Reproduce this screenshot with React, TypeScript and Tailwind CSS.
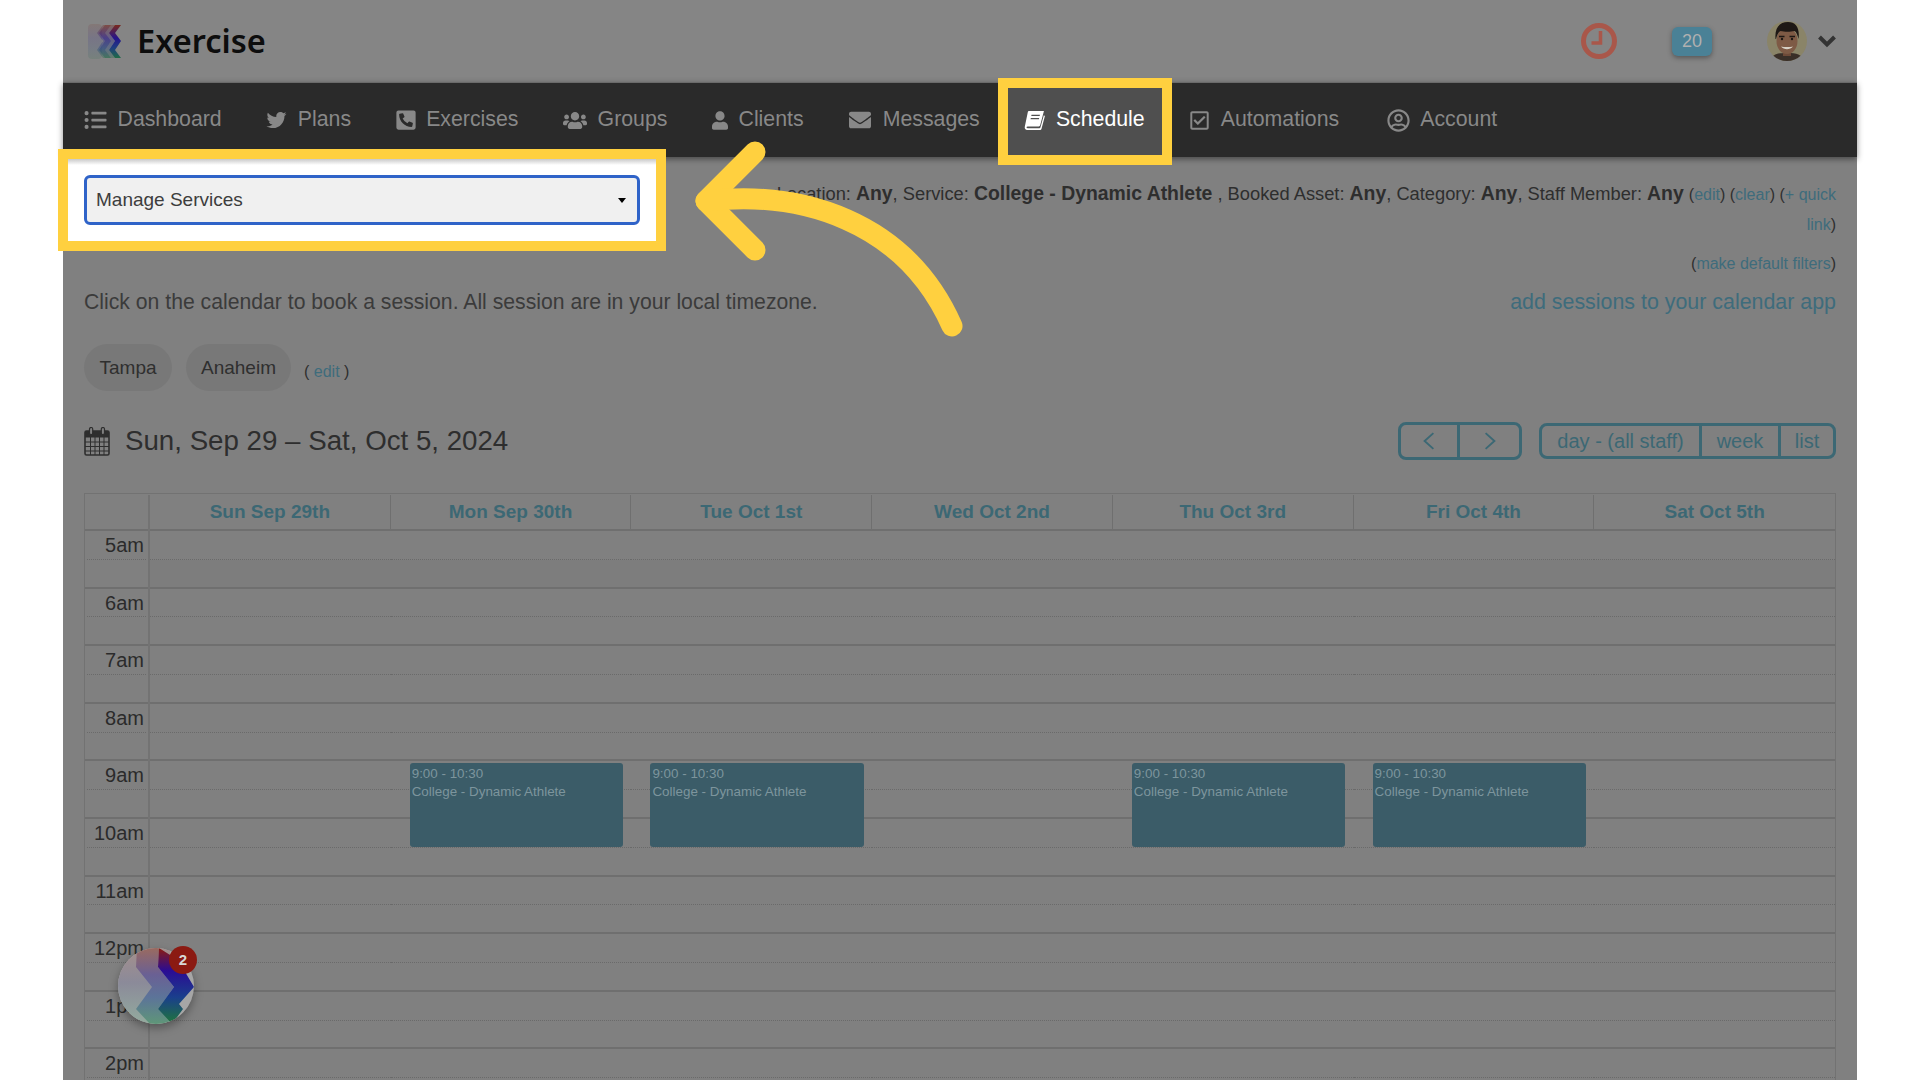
import React from "react";
import {
  FaListUl,
  FaTwitter,
  FaPhoneSquareAlt,
  FaUsers,
  FaUser,
  FaEnvelope,
  FaRegCheckSquare,
  FaRegUserCircle,
} from "react-icons/fa";

function BookIcon({ className }: { className?: string }) {
  return (
    <svg viewBox="0 0 20 20" className={className} fill="currentColor">
      <path d="M5 1h14l-3.6 13.5c-.2.7-.7 1.1-1.4 1.1H3.4c-.9 0-1.3.9-.8 1.4.2.2.5.3.8.3h11.2c.5 0 .9-.3 1-.7L18.900 5l1 .6-3.200 12.200c-.2.8-.9 1.200-1.700 1.200H3C1.500 19 .4 17.700.7 16.200L3.600 2.200C3.700 1.500 4.300 1 5 1zM7.200 4.500l-.3 1.300h8l.3-1.300h-8zm-.7 3l-.3 1.300h8l.3-1.300h-8z" />
    </svg>
  );
}

function CalendarIcon({ className }: { className?: string }) {
  return (
    <svg viewBox="0 0 26 29" className={className} fill="none" stroke="#2e2e2e">
      <path d="M2.500 4h21c.8 0 1.500.7 1.500 1.500V26.500c0 .8-.7 1.500-1.500 1.500h-21c-.8 0-1.500-.7-1.500-1.500V5.500C1 4.700 1.700 4 2.500 4z" strokeWidth="1.600" />
      <rect x="1" y="4" width="24" height="6.500" fill="#2e2e2e" stroke="none" />
      <path d="M1 15h24M1 19.500h24M1 24h24M6.500 10v18M11 10v18M15.500 10v18M20 10v18" strokeWidth="1" />
      <rect x="5.500" y="0.500" width="3.200" height="7" rx="1.600" fill="#808080" strokeWidth="1.200" />
      <rect x="17.300" y="0.500" width="3.200" height="7" rx="1.600" fill="#808080" strokeWidth="1.200" />
    </svg>
  );
}

function LogoMark() {
  const band = "27,1 21,9 27,17 21,26 27,34 33,34 27,26 33,17 27,9 33,1";
  return (
    <svg viewBox="0 0 34 35" className="h-[35px] w-[34px]">
      <defs>
        <linearGradient id="lg1" x1="0" y1="0" x2="0" y2="1">
          <stop offset="0" stopColor="#7a2a1e" />
          <stop offset="0.4" stopColor="#25148c" />
          <stop offset="0.7" stopColor="#1f3f80" />
          <stop offset="1" stopColor="#1f6b45" />
        </linearGradient>
      </defs>
      <rect x="0" y="0" width="14" height="35" rx="4" fill="url(#lg1)" opacity="0.14" />
      <polygon points={band} transform="translate(-10 0)" fill="url(#lg1)" opacity="0.4" />
      <polygon points="15,1 9,9 15,17 9,26 15,34 27,34 21,26 27,17 21,9 27,1" fill="url(#lg1)" opacity="0.35" />
      <polygon points={band} fill="url(#lg1)" />
    </svg>
  );
}

function BubbleMark() {
  const right = "41,0 40,19 56,39 40,61 54,76 65,61 61,56 76,39 60,12";
  const left = "19,0 18,19 34,39 18,61 32,76 54,76 40,61 56,39 40,19 41,0";
  return (
    <svg viewBox="0 0 76 76" className="h-[76px] w-[76px]">
      <defs>
        <linearGradient id="bbg" x1="0" y1="0" x2="0" y2="1">
          <stop offset="0" stopColor="#a58f8c" />
          <stop offset="0.45" stopColor="#8b8a99" />
          <stop offset="1" stopColor="#93ab9e" />
        </linearGradient>
        <linearGradient id="bband" x1="0" y1="0" x2="0" y2="1">
          <stop offset="0" stopColor="#8c1c10" />
          <stop offset="0.3" stopColor="#2a0c94" />
          <stop offset="0.65" stopColor="#1a3f8c" />
          <stop offset="0.95" stopColor="#1e6f45" />
        </linearGradient>
        <linearGradient id="bband2" x1="0" y1="0" x2="0" y2="1">
          <stop offset="0" stopColor="#9a6a60" />
          <stop offset="0.35" stopColor="#6a6094" />
          <stop offset="0.65" stopColor="#5c7499" />
          <stop offset="1" stopColor="#5f9678" />
        </linearGradient>
        <clipPath id="bclip">
          <circle cx="38" cy="38" r="38" />
        </clipPath>
      </defs>
      <g clipPath="url(#bclip)">
        <rect width="76" height="76" fill="#a6a6a6" />
        <rect width="52" height="76" fill="url(#bbg)" />
        <polygon points={left} fill="url(#bband2)" />
        <polygon points={right} fill="url(#bband)" />
      </g>
    </svg>
  );
}

function Avatar() {
  return (
    <svg viewBox="0 0 40 40" className="h-[40px] w-[40px] rounded-full">
      <rect width="40" height="40" fill="#8a8468" />
      <path d="M4 40c1-7 6-8 16-8s15 1 16 8z" fill="#3a2f28" />
      <rect x="16" y="26" width="8" height="9" fill="#6e4a38" />
      <ellipse cx="20" cy="20" rx="10.500" ry="13" fill="#7e5a45" />
      <path d="M8.500 18C7.500 6 13 1 21 1c8 0 12 6 10.500 17-1-4-2-7-4-8-4 1-10 1-14 0-2 1-3.500 4-4.500 8z" fill="#1e1815" />
      <path d="M12 15.500h5.500M22.500 15.500H28" stroke="#1e1815" strokeWidth="1.500" />
      <circle cx="15" cy="18" r="1.200" fill="#1e1815" />
      <circle cx="25" cy="18" r="1.200" fill="#1e1815" />
      <path d="M14 25.500c3 3.500 9 3.500 12 0-3 .8-9 .8-12 0z" fill="#d6cfc4" />
    </svg>
  );
}

const navItems: { label: string; icon: React.ReactNode }[] = [
  { label: "Dashboard", icon: <FaListUl className="h-[22px] w-[23px]" /> },
  { label: "Plans", icon: <FaTwitter className="h-[20px] w-[21px]" /> },
  { label: "Exercises", icon: <FaPhoneSquareAlt className="h-[22px] w-[20px]" /> },
  { label: "Groups", icon: <FaUsers className="h-[23px] w-[24px]" /> },
  { label: "Clients", icon: <FaUser className="h-[21px] w-[16px]" /> },
  { label: "Messages", icon: <FaEnvelope className="h-[22px] w-[24px]" /> },
  { label: "Schedule", icon: <BookIcon className="h-[21px] w-[21px]" /> },
  { label: "Automations", icon: <FaRegCheckSquare className="h-[21px] w-[21px]" /> },
  { label: "Account", icon: <FaRegUserCircle className="ml-[3px] h-[23px] w-[23px]" /> },
];

const days = [
  "Sun Sep 29th",
  "Mon Sep 30th",
  "Tue Oct 1st",
  "Wed Oct 2nd",
  "Thu Oct 3rd",
  "Fri Oct 4th",
  "Sat Oct 5th",
];
const hours = ["5am", "6am", "7am", "8am", "9am", "10am", "11am", "12pm", "1pm", "2pm"];
const eventDays = [1, 2, 4, 5];

function L({ children }: { children: React.ReactNode }) {
  return <span className="text-[#3e6c7c]">{children}</span>;
}

function B({ children }: { children: React.ReactNode }) {
  return <b className="text-[19.400px] leading-none">{children}</b>;
}

export default function App() {
  return (
    <div className="relative h-[1080px] w-[1920px] overflow-hidden bg-white font-['Liberation_Sans',Arial,sans-serif]">
      <div className="relative ml-[63px] h-[1080px] w-[1794px] bg-[#808080]">
        {/* top bar */}
        <header className="flex h-[82px] items-center bg-[#858585] pl-[25px] pr-[21px]">
          <LogoMark />
          <span className="ml-[15px] font-['Noto_Sans',sans-serif] text-[32.500px] font-semibold leading-none text-[#0d0d0d]">
            Exercise
          </span>
          <div className="ml-auto flex items-center">
            <svg viewBox="0 0 38 38" className="h-[38px] w-[38px]">
              <circle cx="19" cy="19" r="15.500" fill="none" stroke="#a9574a" strokeWidth="5" />
              <path d="M20.500 9v12h-9" fill="none" stroke="#a9574a" strokeWidth="3.500" />
            </svg>
            <div className="ml-[54px] flex h-[29px] w-[40px] items-center justify-center rounded-[6px] bg-[#4a8196] text-[18px] text-[#b0b0b0] shadow-[0_2px_5px_rgba(0,0,0,0.35)]">
              20
            </div>
            <div className="ml-[55px]">
              <Avatar />
            </div>
            <svg viewBox="0 0 18 14" className="ml-[11px] h-[14px] w-[18px]" fill="none" stroke="#333333" strokeWidth="4">
              <path d="M1.500 3L9 10.500 16.500 3" />
            </svg>
          </div>
        </header>

        {/* nav */}
        <nav className="relative flex h-[75px] items-center gap-[44.600px] border-t border-[#6a6a6a] bg-[#2a2a2a] pl-[21px] shadow-[0_2px_6px_rgba(0,0,0,0.45)]">
          {navItems.map((item) => (
            <a
              key={item.label}
              className={
                item.label === "Schedule"
                  ? "relative z-10 flex items-center gap-[10.500px] text-[21.300px] text-white"
                  : "flex items-center gap-[10.500px] text-[21.300px] text-[#888888]"
              }
            >
              {item.label === "Schedule" && (
                <span className="absolute left-[-26px] top-[-26px] -z-10 h-[87px] w-[174px] border-[10px] border-[#ffd03f] bg-[#4f4f4f]" />
              )}
              {item.icon}
              <span>{item.label}</span>
            </a>
          ))}
        </nav>

        {/* content */}
        <main className="px-[21px] pt-[18px]">
          <div className="flex h-[112px] items-start justify-between">
            <div className="relative z-20 w-[556px]">
              <div className="absolute left-[-26px] right-[-26px] top-[-26px] h-[102px] border-[10px] border-[#ffd03f] bg-white">
                <div className="h-[6px] bg-gradient-to-b from-[#c9c9c9] to-white" />
              </div>
              <div className="relative flex h-[50px] items-center rounded-[6px] border-[3px] border-[#2f63c8] bg-[#f0f0f0] pl-[9px] pr-[11px] pt-[1px] text-[19px] text-[#3d3d3d]">
                Manage Services
                <span className="ml-auto h-0 w-0 border-x-[4px] border-t-[5px] border-x-transparent border-t-black" />
              </div>
            </div>
            <div className="w-[1068px] pt-[3.500px] text-right text-[18.300px] leading-[30px] text-[#2e2e2e]">
              <div>
                Location: <B>Any</B>, Service: <B>College - Dynamic Athlete</B> , Booked Asset: <B>Any</B>, Category:{" "}
                <B>Any</B>, Staff Member: <B>Any</B>{" "}
                <span className="text-[16px] leading-none">
                  (<L>edit</L>) (<L>clear</L>) (<L>+ quick</L>
                </span>{" "}
                <span className="text-[16px] leading-none">
                  <L>link</L>)
                </span>
              </div>
              <div className="mt-[13px] text-[16px] leading-[24px]">
                (<L>make default filters</L>)
              </div>
            </div>
          </div>

          <div className="flex h-[30px] items-center justify-between text-[21.200px]">
            <span className="text-[#3b3b3b]">Click on the calendar to book a session. All session are in your local timezone.</span>
            <span className="text-[21.400px] text-[#3e6c7c]">add sessions to your calendar app</span>
          </div>

          <div className="mt-[27px] flex h-[47px] items-center">
            <span className="flex h-[47px] w-[88px] items-center justify-center rounded-[24px] bg-[#787878] pt-[1px] text-[19px] text-[#2f2f2f]">Tampa</span>
            <span className="ml-[14px] flex h-[47px] w-[105px] items-center justify-center rounded-[24px] bg-[#787878] pt-[1px] text-[19px] text-[#2f2f2f]">Anaheim</span>
            <span className="ml-[13px] mt-[8px] text-[16px] text-[#2e2e2e]">( <L>edit</L> )</span>
          </div>

          <div className="mt-[31px] flex h-[38px] items-center">
            <CalendarIcon className="h-[29px] w-[26px]" />
            <span className="ml-[15px] text-[27.700px] text-[#2e2e2e]">Sun, Sep 29 – Sat, Oct 5, 2024</span>
            <div className="ml-auto flex h-[38px] w-[124px] rounded-[8px] border-[3px] border-[#3c6874] text-[#3c6874]">
              <div className="flex w-[59px] items-center justify-center border-r-[3px] border-[#3c6874]">
                <svg viewBox="0 0 16 22" className="h-[20px] w-[14px]" fill="none" stroke="currentColor" strokeWidth="2.200"><path d="M13 2L3 11l10 9" /></svg>
              </div>
              <div className="flex flex-1 items-center justify-center">
                <svg viewBox="0 0 16 22" className="h-[20px] w-[14px]" fill="none" stroke="currentColor" strokeWidth="2.200"><path d="M3 2l10 9-10 9" /></svg>
              </div>
            </div>
            <div className="ml-[17px] flex h-[36px] w-[297px] rounded-[8px] border-[3px] border-[#3c6874] text-[20px] text-[#3c6874]">
              <div className="flex w-[160px] items-center justify-center border-r-[3px] border-[#3c6874]">day - (all staff)</div>
              <div className="flex w-[79px] items-center justify-center border-r-[3px] border-[#3c6874]">week</div>
              <div className="flex flex-1 items-center justify-center">list</div>
            </div>
          </div>

          {/* calendar */}
          <div className="mt-[33px] border border-[#727272]">
            <div className="flex h-[37px] pt-[1px] text-[19px] font-bold text-[#3c6874]">
              <div className="w-[63px] border-b-2 border-[#6f6f6f]" />
              <div className="grid flex-1 grid-cols-7 border-l-2 border-[#737373]">
                {days.map((d, i) => (
                  <div
                    key={d}
                    className={
                      i === 6
                        ? "flex items-center justify-center border-b-2 border-[#6f6f6f]"
                        : "flex items-center justify-center border-b-2 border-r border-[#6f6f6f]"
                    }
                  >
                    {d}
                  </div>
                ))}
              </div>
            </div>
            <div className="flex">
              <div className="w-[63px]">
                {hours.map((h) => (
                  <div key={h} className="h-[57.600px] border-b-2 border-[#6f6f6f] px-[2px]">
                    <div className="h-[28.800px] border-b border-dotted border-[#6a6a6a] pr-[2px] pt-[1px] text-right text-[20px] leading-[26px] text-[#2b2b2b]">
                      {h}
                    </div>
                  </div>
                ))}
              </div>
              <div className="grid flex-1 grid-cols-7 border-l-2 border-[#737373]">
                {days.map((d, i) => (
                  <div key={d}>
                    {hours.map((h) => (
                      <div key={h} className="relative h-[57.600px] border-b-2 border-[#6f6f6f]">
                        <div className="h-[28.800px] border-b border-dotted border-[#6a6a6a]" />
                        {h === "5am" && <div className="h-[27px] bg-[#7d7d7d]" />}
                        {h === "9am" && eventDays.includes(i) && (
                          <div className="absolute left-[19px] top-[2px] z-10 h-[84px] w-[213.500px] rounded-[3px] bg-[#3b5c68] pl-[2px] pt-[2px] text-[13.400px] leading-[18px] text-[#7d959d]">
                            <div>9:00 - 10:30</div>
                            <div>College - Dynamic Athlete</div>
                          </div>
                        )}
                      </div>
                    ))}
                  </div>
                ))}
              </div>
            </div>
          </div>
        </main>

        {/* arrow */}
        <svg className="pointer-events-none absolute left-[-63px] top-0 z-30 h-[1080px] w-[1920px]" viewBox="0 0 1920 1080" fill="none" stroke="#ffd03f" strokeWidth="21" strokeLinecap="round" strokeLinejoin="round">
          <path d="M755 152L706 201L755 250" />
          <path d="M706 201C800 190 905 220 952 326" />
        </svg>

        {/* chat bubble */}
        <div className="absolute left-[55px] top-[948px] z-30 h-[76px] w-[76px] rounded-full shadow-[0_4px_10px_rgba(0,0,0,0.35)]">
          <BubbleMark />
          <span className="absolute left-[51px] top-[-2px] flex h-[28px] w-[28px] items-center justify-center rounded-full bg-[#8b1a12] text-[15px] font-bold text-[#d8d8d8]">2</span>
        </div>
      </div>
    </div>
  );
}
